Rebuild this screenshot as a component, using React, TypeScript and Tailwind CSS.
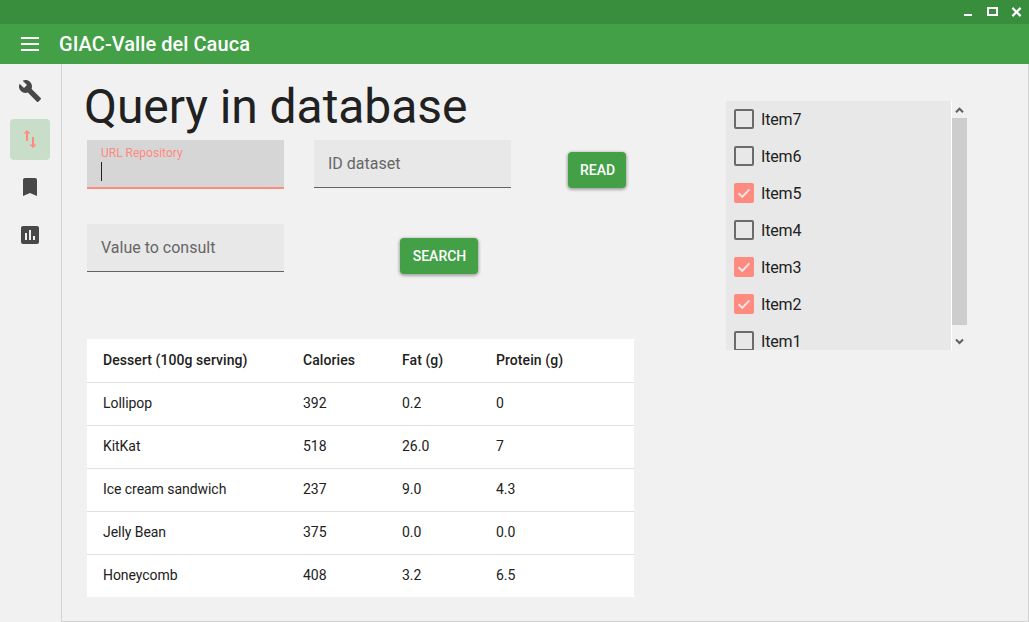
import React from 'react';

const desserts = [
  ['Lollipop', '392', '0.2', '0'],
  ['KitKat', '518', '26.0', '7'],
  ['Ice cream sandwich', '237', '9.0', '4.3'],
  ['Jelly Bean', '375', '0.0', '0.0'],
  ['Honeycomb', '408', '3.2', '6.5'],
];

const items = [
  { label: 'Item7', checked: false },
  { label: 'Item6', checked: false },
  { label: 'Item5', checked: true },
  { label: 'Item4', checked: false },
  { label: 'Item3', checked: true },
  { label: 'Item2', checked: true },
  { label: 'Item1', checked: false },
];

function TitleBar() {
  return (
    <div className="flex h-6 shrink-0 items-center justify-end bg-[#388e3c] text-white">
      <svg width="65" height="24" viewBox="0 0 65 24" fill="currentColor" shapeRendering="crispEdges">
        <path d="M0 14h8v2H0z" />
        <path fillRule="evenodd" d="M23 7h11v9H23zM25 9v5h7V9z" />
        <path d="M48.4 7.9 56.6 16.1M56.6 7.9 48.4 16.1" stroke="currentColor" strokeWidth="2.2" shapeRendering="auto" />
      </svg>
    </div>
  );
}

function AppBar() {
  return (
    <header className="flex h-10 shrink-0 items-center bg-[#43a047] pl-[21px] text-white">
      <svg width="18" height="14" viewBox="0 0 18 14" fill="currentColor" shapeRendering="crispEdges">
        <path d="M0 0h18v2H0zM0 6h18v2H0zM0 12h18v2H0z" />
      </svg>
      <span className="ml-5 text-[20px] leading-6 font-medium tracking-[0.06px]">GIAC-Valle del Cauca</span>
    </header>
  );
}

function NavItem({ path, active }: { path: string; active?: boolean }) {
  return (
    <div
      className={
        active
          ? 'flex h-[41px] w-10 items-start justify-center rounded bg-[#c8dec9] pt-2 text-[#ff8a80]'
          : 'flex h-[41px] w-10 items-start justify-center rounded pt-2 text-[#484848]'
      }
    >
      <svg className="size-6" viewBox="0 0 24 24" fill="currentColor">
        <path d={path} />
      </svg>
    </div>
  );
}

function SideNav() {
  return (
    <nav className="flex w-[62px] shrink-0 flex-col gap-[7px] border-r border-[#d2d2d2] pt-[7px] pl-2.5">
      <NavItem path="M22.7 19l-9.1-9.1c.9-2.3.4-5-1.5-6.9-2-2-5-2.4-7.4-1.3L9 6 6 9 1.6 4.7C.4 7.1.9 10.1 2.9 12.1c1.9 1.9 4.6 2.4 6.9 1.5l9.1 9.1c.4.4 1 .4 1.4 0l2.3-2.3c.5-.4.5-1.1.1-1.4z" />
      <NavItem active path="M9 3 5.5 6.5H8V14h2V6.5h2.5zM16 17.5V10h-2v7.5h-2.5L15 21l3.5-3.5z" />
      <NavItem path="M17 3H7c-1.1 0-2 .9-2 2v16l7-3 7 3V5c0-1.1-.9-2-2-2z" />
      <NavItem path="M19 3H5c-1.1 0-2 .9-2 2v14c0 1.1.9 2 2 2h14c1.1 0 2-.9 2-2V5c0-1.1-.9-2-2-2zM9 17H7v-7h2v7zm4 0h-2V7h2v10zm4 0h-2v-4h2v4z" />
    </nav>
  );
}

function Field({ label }: { label: string }) {
  return (
    <div className="h-12 w-[197px] border-b border-[#636363] bg-[#e8e8e8] px-3.5 pt-3 text-[16px] leading-6 text-[#666]">
      {label}
    </div>
  );
}

function FocusedField({ label }: { label: string }) {
  return (
    <div className="h-[49px] w-[197px] border-b-2 border-[#ff8a80] bg-[#d6d6d6] px-3.5 pt-[5px]">
      <div className="text-[12px] leading-4 text-[#ff8a80]">{label}</div>
      <div className="mt-px h-[19px] w-px bg-[#222]" />
    </div>
  );
}

function RaisedButton({ label, className }: { label: string; className: string }) {
  return (
    <button
      className={
        'flex h-9 items-center justify-center rounded-[4px] bg-[#43a047] pl-px text-[14px] font-medium text-white shadow-[0_1px_3px_1px_rgba(0,0,0,0.3)] ' +
        className
      }
    >
      {label}
    </button>
  );
}

function DessertTable() {
  return (
    <table className="h-[258px] w-[547px] table-fixed border-collapse bg-white text-left text-[14px] text-[#212121]">
      <colgroup>
        <col className="w-[200px]" />
        <col className="w-[99px]" />
        <col className="w-[94px]" />
        <col />
      </colgroup>
      <thead>
        <tr className="h-[43px] border-b border-[#e0e0e0]">
          {['Dessert (100g serving)', 'Calories', 'Fat (g)', 'Protein (g)'].map((h) => (
            <th key={h} className="p-0 pl-4 font-medium tracking-[0.07px]">{h}</th>
          ))}
        </tr>
      </thead>
      <tbody>
        {desserts.map((row) => (
          <tr key={row[0]} className="h-[43px] border-b border-[#e0e0e0] last:border-b-0">
            {row.map((cell, i) => (
              <td key={i} className={i === 0 ? 'p-0 pl-4 tracking-[-0.05px]' : 'p-0 pl-4'}>{cell}</td>
            ))}
          </tr>
        ))}
      </tbody>
    </table>
  );
}

function CheckRow({ label, checked }: { label: string; checked: boolean }) {
  return (
    <div className="flex h-[37px] shrink-0 items-start pt-2 pl-2">
      {checked ? (
        <svg className="size-5 rounded-[2px] bg-[#ff8a80]" viewBox="0 0 20 20">
          <path d="M4.6 10.2 8.3 13.9 15.4 6.4" fill="none" stroke="#e8e8e8" strokeWidth="2" />
        </svg>
      ) : (
        <div className="size-5 rounded-[2px] border-2 border-[#6b6b6b]" />
      )}
      <span className="-mt-px ml-[7px] text-[16px] leading-6 tracking-[-0.15px] text-[#212121]">{label}</span>
    </div>
  );
}

function ItemList() {
  return (
    <div className="flex h-[249px]">
      <div className="flex w-[225px] flex-col overflow-hidden bg-[#e8e8e8]">
        {items.map((item) => (
          <CheckRow key={item.label} label={item.label} checked={item.checked} />
        ))}
      </div>
      <div className="flex w-4 flex-col border-l border-white bg-[#f0f0f0] text-[#606060]">
        <svg width="15" height="17" viewBox="0 0 15 17" fill="none" stroke="currentColor" strokeWidth="2">
          <path d="M4 11.2 7.5 7.7 11 11.2" />
        </svg>
        <div className="h-[207px] bg-[#cdcdcd]" />
        <svg width="15" height="25" viewBox="0 0 15 25" fill="none" stroke="currentColor" strokeWidth="2">
          <path d="M4 14.5 7.5 18 11 14.5" />
        </svg>
      </div>
    </div>
  );
}

export default function App() {
  return (
    <div className="flex h-[622px] w-[1029px] flex-col overflow-hidden bg-[#f1f1f1] font-['Roboto',sans-serif]">
      <TitleBar />
      <AppBar />
      <div className="flex min-h-0 flex-1">
        <SideNav />
        <main className="flex flex-1 items-start border-r border-b border-[#d2d2d2] pl-[25px]">
          <div className="flex h-[557px] w-[547px] flex-col">
            <h1 className="-ml-[3px] pt-[15px] text-[48px] leading-[56px] tracking-[-0.08px] text-[#212121]">
              Query in database
            </h1>
            <div className="mt-[5px] flex h-[84px] items-start">
              <FocusedField label="URL Repository" />
              <div className="ml-[30px]">
                <Field label="ID dataset" />
              </div>
              <RaisedButton label="READ" className="mt-3 ml-[57px] w-[58px]" />
            </div>
            <div className="flex h-[115px] items-start">
              <Field label="Value to consult" />
              <RaisedButton label="SEARCH" className="mt-3.5 ml-[116px] w-[78px]" />
            </div>
            <DessertTable />
          </div>
          <div className="mt-[37px] ml-[92px]">
            <ItemList />
          </div>
        </main>
      </div>
    </div>
  );
}
